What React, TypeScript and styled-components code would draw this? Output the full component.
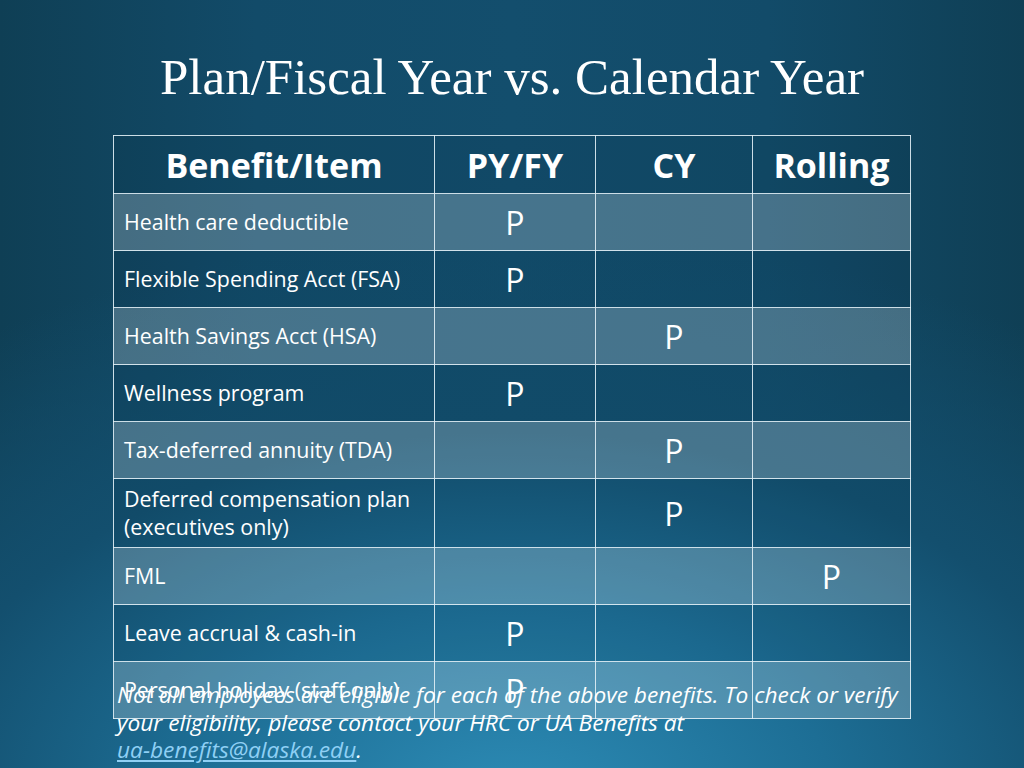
import styled, { createGlobalStyle } from 'styled-components'

const GlobalStyle = createGlobalStyle`
    html, body {
        margin: 0;
        padding: 0;
    }
    body {
        font-family: "Open Sans", "Noto Sans", sans-serif;
    }
`

interface Row {
    item: string[]
    mark: 'py' | 'cy' | 'rolling'
}

const rows: Row[] = [
  { item: ['Health care deductible'], mark: 'py' },
  { item: ['Flexible Spending Acct (FSA)'], mark: 'py' },
  { item: ['Health Savings Acct (HSA)'], mark: 'cy' },
  { item: ['Wellness program'], mark: 'py' },
  { item: ['Tax-deferred annuity (TDA)'], mark: 'cy' },
  { item: ['Deferred compensation plan', '(executives only)'], mark: 'cy' },
  { item: ['FML'], mark: 'rolling' },
  { item: ['Leave accrual & cash-in'], mark: 'py' },
  { item: ['Personal holiday (staff only)'], mark: 'py' }
]

const Slide = styled.div`
    position: relative;
    width: 1024px;
    height: 768px;
    overflow: hidden;
    box-sizing: border-box;
    padding-top: 48px;
    background:
        radial-gradient(ellipse 90% 75% at 50% 105%, #2d8cb6 0%, #1d6e95 35%, #134f6e 65%, transparent 100%),
        linear-gradient(90deg, #0f3f55 0%, #124b69 25%, #134e6d 50%, #124b69 75%, #0f3f55 100%);
    display: flex;
    flex-direction: column;
    align-items: center;
`

const Title = styled.h1`
    margin: 0 0 28px;
    font-family: "Liberation Serif", "Times New Roman", serif;
    font-weight: 400;
    font-size: 51px;
    line-height: 59px;
    color: #ffffff;
`

const Table = styled.table`
    width: 798px;
    border-collapse: collapse;
    table-layout: fixed;
    color: #ffffff;
`

const HeadCell = styled.th<{ $width: string }>`
    width: ${({ $width }) => $width};
    height: 57px;
    padding: 0;
    border: 1.5px solid rgba(225, 238, 245, 0.9);
    font-size: 34px;
    font-weight: 700;
    text-align: center;
    background: rgba(0, 20, 40, 0.08);
`

const BodyRow = styled.tr<{ $light: boolean }>`
    background: ${({ $light }) => ($light ? 'rgba(255, 255, 255, 0.22)' : 'rgba(0, 20, 40, 0.06)')};
`

const ItemCell = styled.td<{ $tall: boolean }>`
    height: ${({ $tall }) => ($tall ? 69 : 57)}px;
    padding: 4px 10px;
    box-sizing: border-box;
    border: 1.5px solid rgba(225, 238, 245, 0.9);
    font-size: 21.4px;
    line-height: 28px;
    vertical-align: middle;
`

const MarkCell = styled.td`
    padding: 0;
    border: 1.5px solid rgba(225, 238, 245, 0.9);
    font-size: 32px;
    text-align: center;
    vertical-align: middle;
`

const Note = styled.p`
    position: absolute;
    left: 117px;
    top: 681px;
    width: 800px;
    margin: 0;
    font-size: 22.7px;
    line-height: 27.5px;
    font-style: italic;
    color: #ffffff;
`

const Mail = styled.a`
    color: #8fd0f5;
    text-decoration: underline;
    white-space: nowrap;
`

const App = () => {
  return (
        <>
            <GlobalStyle />
            <Slide>
                <Title>Plan/Fiscal Year vs. Calendar Year</Title>
                <Table>
                    <thead>
                        <tr>
                            <HeadCell $width="40.35%">Benefit/Item</HeadCell>
                            <HeadCell $width="20.18%">PY/FY</HeadCell>
                            <HeadCell $width="19.67%">CY</HeadCell>
                            <HeadCell $width="19.8%">Rolling</HeadCell>
                        </tr>
                    </thead>
                    <tbody>
                        {rows.map((row, i) => (
                            <BodyRow key={row.item[0]} $light={i % 2 === 0}>
                                <ItemCell $tall={row.item.length > 1}>
                                    {row.item.map((line, j) => (
                                        <span key={line}>{j > 0 && <br />}{line}</span>
                                    ))}
                                </ItemCell>
                                <MarkCell>{row.mark === 'py' ? 'P' : ''}</MarkCell>
                                <MarkCell>{row.mark === 'cy' ? 'P' : ''}</MarkCell>
                                <MarkCell>{row.mark === 'rolling' ? 'P' : ''}</MarkCell>
                            </BodyRow>
                        ))}
                    </tbody>
                </Table>
                <Note>
                    Not all employees are eligible for each of the above benefits. To check or verify your eligibility, please contact your HRC or UA Benefits at{' '}
                    <Mail href="mailto:ua-benefits@alaska.edu">ua-benefits@alaska.edu</Mail>.
                </Note>
            </Slide>
        </>
  )
}

export default App
